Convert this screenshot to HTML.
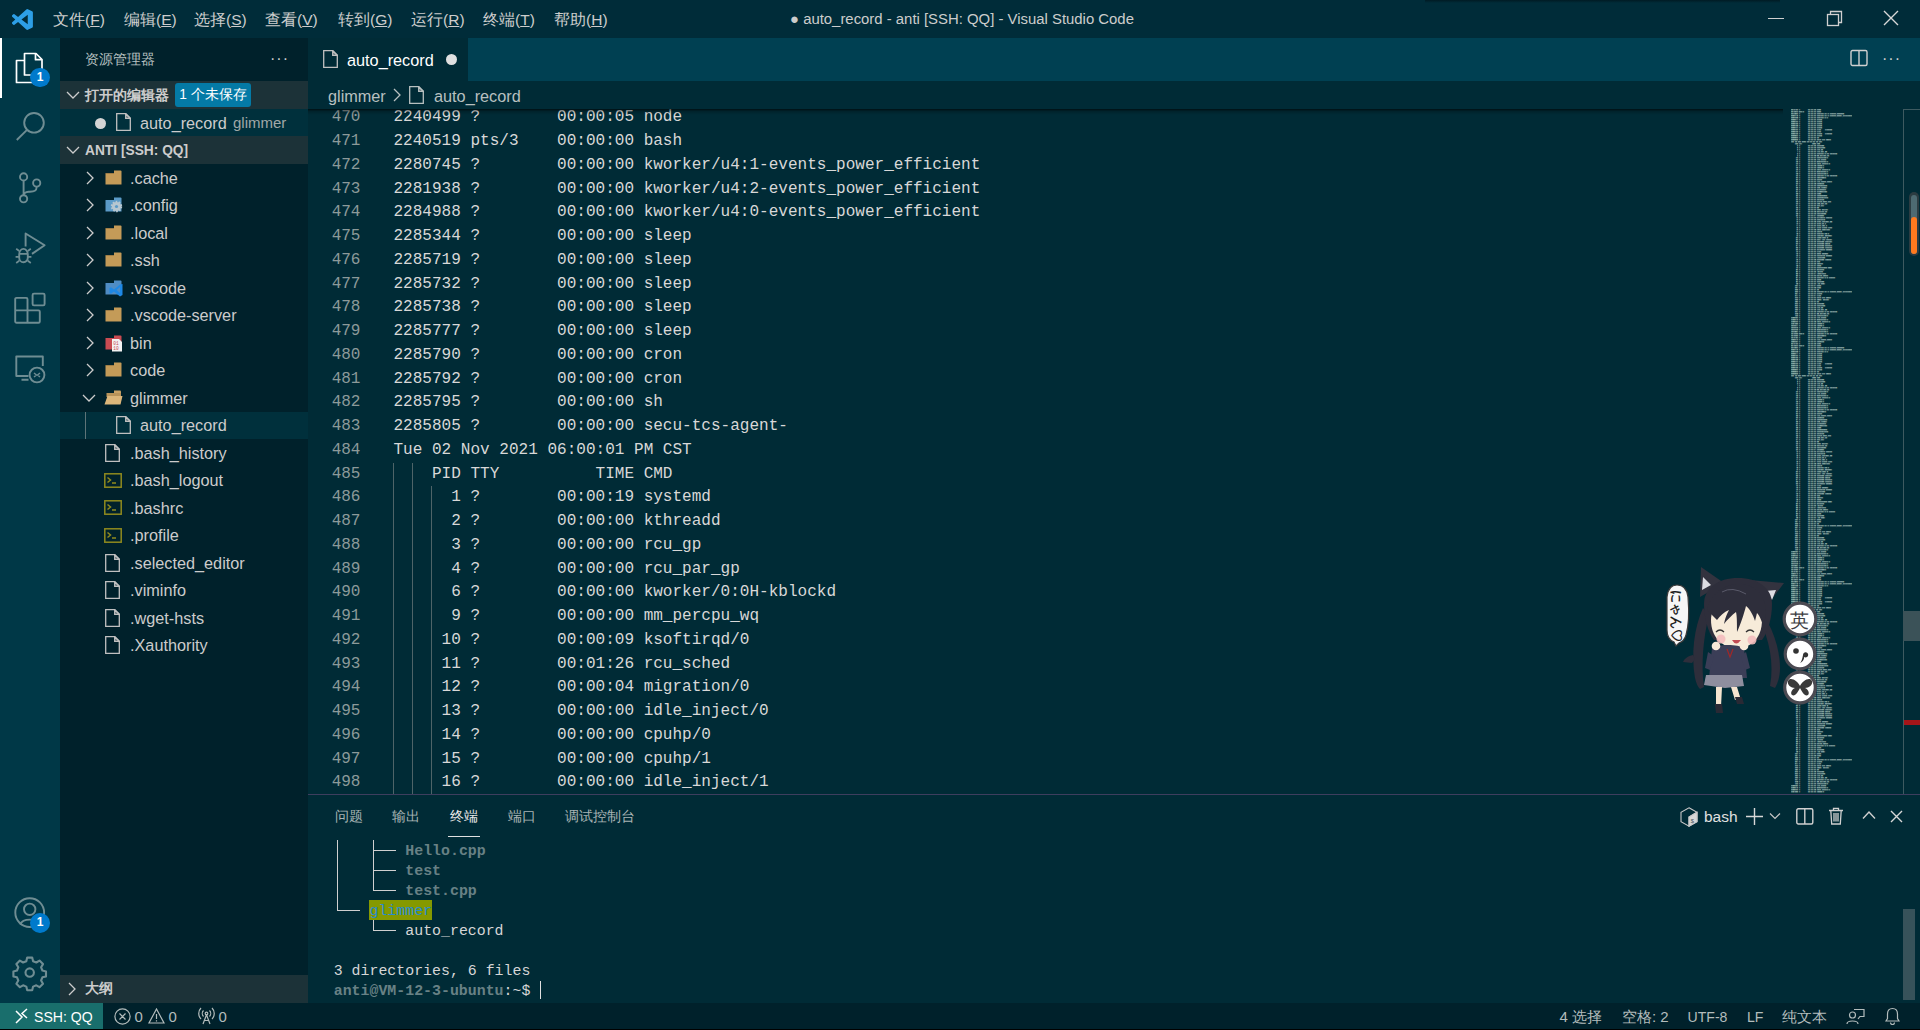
<!DOCTYPE html>
<html><head><meta charset="utf-8">
<style>
html,body{margin:0;padding:0;}
body{width:1920px;height:1030px;overflow:hidden;position:relative;background:#002b36;font-family:"Liberation Sans",sans-serif;color:#cccccc;}
.a{position:absolute;}
.ui{font-family:"Liberation Sans",sans-serif;white-space:pre;}
/* title bar */
#title{left:0;top:0;width:1920px;height:38px;background:#002c39;}
.menu{top:11px;font-size:15.5px;color:#cccccc;line-height:18px;}
/* activity bar */
#act{left:0;top:38px;width:60px;height:965px;background:#003847;}
/* sidebar */
#side{left:60px;top:38px;width:248px;height:965px;background:#00212b;}
.sech{left:60px;width:248px;height:28px;background:#1c3238;}
.row{left:60px;width:248px;height:27.5px;}
.ti{font-size:16.25px;color:#cccccc;line-height:20px;}
/* editor */
#tabs{left:308px;top:38px;width:1612px;height:43px;background:#004052;}
#tab1{left:308px;top:38px;width:160px;height:43px;background:#002b36;}
#bc{left:308px;top:81px;width:1612px;height:27.75px;background:#002b36;}
.ln{position:absolute;left:308px;width:52.5px;text-align:right;font-family:"Liberation Mono",monospace;font-size:16.04px;line-height:23.75px;color:#8c9a9a;white-space:pre;}
.tx{position:absolute;left:393.5px;font-family:"Liberation Mono",monospace;font-size:16.04px;line-height:23.75px;color:#d8d8d8;white-space:pre;}
.guide{position:absolute;width:1px;background:#4e6468;}
#edclip{left:308px;top:108.75px;width:1612px;height:685.25px;overflow:hidden;}
/* panel */
#panel{left:308px;top:794px;width:1612px;height:209px;background:#002b36;border-top:1px solid #3e3e5e;box-sizing:border-box;}
.ptab{top:808px;font-size:13.75px;color:#a9b4b4;line-height:18px;}
.term{position:absolute;font-family:"Liberation Mono",monospace;font-size:14.9px;line-height:20px;white-space:pre;color:#d6d6d6;}
/* status */
#status{left:0;top:1003px;width:1920px;height:26px;background:#00212b;}
.st{top:1008px;font-size:15px;color:#b3bcbc;line-height:18px;}
</style></head>
<body>
<!-- TITLE BAR -->
<div id="title" class="a"></div>
<div class="a" style="left:1425px;top:0;width:355px;height:3px;background:linear-gradient(#001b24,#002c3900)"></div>
<svg class="a" style="left:12px;top:9px" width="21" height="21" viewBox="0 0 100 100">
  <path d="M96 10.8 75.4 0.9a6.2 6.2 0 0 0-7.1 1.2L28.9 38 11.7 25a4.2 4.2 0 0 0-5.3.2L.9 30.2a4.2 4.2 0 0 0 0 6.2L15.8 50 .9 63.6a4.2 4.2 0 0 0 0 6.2l5.5 5a4.2 4.2 0 0 0 5.3.2L28.9 62l39.4 35.9a6.2 6.2 0 0 0 7.1 1.2L96 89.2a6.2 6.2 0 0 0 3.5-5.6V16.4a6.2 6.2 0 0 0-3.5-5.6ZM75 72.7 45.1 50 75 27.3Z" fill="#2d9fe6"/>
</svg>
<div class="a ui menu" style="left:53px">文件(<u>F</u>)</div>
<div class="a ui menu" style="left:124px">编辑(<u>E</u>)</div>
<div class="a ui menu" style="left:194px">选择(<u>S</u>)</div>
<div class="a ui menu" style="left:265px">查看(<u>V</u>)</div>
<div class="a ui menu" style="left:338px">转到(<u>G</u>)</div>
<div class="a ui menu" style="left:411px">运行(<u>R</u>)</div>
<div class="a ui menu" style="left:483px">终端(<u>T</u>)</div>
<div class="a ui menu" style="left:554px">帮助(<u>H</u>)</div>
<div class="a ui" style="left:790px;top:10px;font-size:14.9px;line-height:18px;color:#cccccc">● auto_record - anti [SSH: QQ] - Visual Studio Code</div>
<div class="a" style="left:1768px;top:18px;width:16px;height:1.3px;background:#d0d0d0"></div>
<svg class="a" style="left:1826px;top:10px" width="17" height="17" viewBox="0 0 17 17" fill="none" stroke="#d0d0d0" stroke-width="1.3"><rect x="1.5" y="4.5" width="11" height="11"/><path d="M4.5 4.5V1.5h11v11h-3"/></svg>
<svg class="a" style="left:1883px;top:10px" width="16" height="16" viewBox="0 0 16 16" stroke="#d8d8d8" stroke-width="1.4"><path d="M1 1 15 15M15 1 1 15"/></svg>

<!-- ACTIVITY BAR -->
<div id="act" class="a"></div>
<div class="a" style="left:0;top:38px;width:2px;height:60px;background:#ffffff"></div>
<svg class="a" style="left:0;top:0" width="60" height="1003" viewBox="0 0 60 1003" fill="none" stroke-linejoin="round">
 <g stroke="#ffffff" stroke-width="1.7">
  <path d="M24.5 53.5h11.5l6 6v15.5h-17.5z"/><path d="M35.5 53.5v6.2h6.2"/><path d="M24.5 60.5h-8v22h17v-7.5"/>
 </g>
 <g stroke="#6f8d93" stroke-width="1.9">
  <circle cx="34" cy="122.8" r="9.8"/><path d="M27 129.8 16.8 140"/>
  <circle cx="23.6" cy="176.9" r="3.6"/><circle cx="36.7" cy="183" r="3.6"/><circle cx="23.6" cy="198.8" r="3.6"/>
  <path d="M23.6 180.5v14.7M36.7 186.6c0 5-3 4.8-8 5.2-3 .3-5 1.4-5 3.4"/>
  <path d="M25.6 246.5V233.5l19 11.8-12.6 8.6"/>
  <path d="M19.2 254.5a4.3 5.6 0 0 1 8.6 0v3.2a4.3 4.6 0 0 1-8.6 0z"/><path d="M19.2 253.8h8.6M19.2 251l-3-2.2M19.2 256.8h-3.6M19.2 260.8l-3 2.2M27.8 251l3-2.2M27.8 256.8h3.6M27.8 260.8l3 2.2" stroke-width="1.7"/>
  <path d="M15.2 310.4h12.3v-11.2a1.3 1.3 0 0 0-1.3-1.3h-9.7a1.3 1.3 0 0 0-1.3 1.3zM15.2 310.4v11a1.3 1.3 0 0 0 1.3 1.3h22a1.3 1.3 0 0 0 1.3-1.3v-9.7a1.3 1.3 0 0 0-1.3-1.3H27.5v12.3"/>
  <rect x="32.6" y="293.6" width="12" height="11.8" rx="1.3"/>
  <path d="M28.5 376H16.3V356.5h26.5v9.5M21.5 379.8h7"/><circle cx="37" cy="375" r="7.4"/><path d="M34 373l2.5 2-2.5 2M40 373l-2.5 2 2.5 2" stroke-width="1.4"/>
  <circle cx="29.7" cy="912.6" r="14.4"/><circle cx="29.7" cy="909.3" r="5.7"/><path d="M20 924.5c3-6.5 16.5-6.5 19.5 0"/>
  <path d="M27.2 957.6h5l.9 3.6 3.2 1.3 3.2-1.9 3.5 3.5-1.9 3.2 1.3 3.2 3.6.9v5l-3.6.9-1.3 3.2 1.9 3.2-3.5 3.5-3.2-1.9-3.2 1.3-.9 3.6h-5l-.9-3.6-3.2-1.3-3.2 1.9-3.5-3.5 1.9-3.2-1.3-3.2-3.6-.9v-5l3.6-.9 1.3-3.2-1.9-3.2 3.5-3.5 3.2 1.9 3.2-1.3z" stroke-width="2.1"/>
  <circle cx="29.7" cy="972.6" r="4.2" stroke-width="2.1"/>
 </g>
</svg>
<div class="a" style="left:30.3px;top:68.1px;width:19.4px;height:19.4px;border-radius:50%;background:#007acc;color:#fff;font-size:12px;font-weight:bold;text-align:center;line-height:19.4px">1</div>
<div class="a" style="left:30.3px;top:913.2px;width:19.8px;height:19.8px;border-radius:50%;background:#007acc;color:#fff;font-size:12px;font-weight:bold;text-align:center;line-height:19.8px">1</div>

<!-- SIDEBAR -->
<div id="side" class="a"></div>
<div class="a ui" style="left:85px;top:51px;font-size:13.75px;line-height:18px;color:#b9c2c2">资源管理器</div>
<div class="a ui" style="left:270px;top:50px;font-size:16px;line-height:18px;color:#cccccc;letter-spacing:1px">···</div>
<!-- open editors header -->
<div class="a sech" style="top:81px"></div>
<svg class="a" style="left:66px;top:89px" width="14" height="12" viewBox="0 0 14 12" fill="none" stroke="#cccccc" stroke-width="1.3"><path d="M1 3l6 6 6-6"/></svg>
<div class="a ui" style="left:85px;top:87px;font-size:13.75px;line-height:18px;font-weight:bold;color:#cccccc">打开的编辑器</div>
<div class="a ui" style="left:175px;top:83px;width:76px;height:24px;background:#047aa6;border-radius:3px;color:#ffffff;font-size:13.75px;line-height:24px;text-align:center">1 个未保存</div>
<!-- open editor row -->
<div class="a row" style="top:109px;height:27px;background:#00303c"></div>
<div class="a" style="left:94.5px;top:117.5px;width:11px;height:11px;border-radius:50%;background:#d4d4d4"></div>
<svg class="a fileico" style="left:116px;top:113px" width="15" height="18" viewBox="0 0 15 18" fill="none" stroke="#c0c0c0" stroke-width="1.3"><path d="M.7.7h9l4.6 4.6v12H.7z"/><path d="M9.7.7v4.6h4.6z" fill="#a8a8a8" fill-opacity=".5"/></svg>
<div class="a ui ti" style="left:140px;top:113px">auto_record</div>
<div class="a ui ti" style="left:233px;top:113px;color:#a0a8a8;font-size:15px">glimmer</div>
<!-- workspace header -->
<div class="a sech" style="top:136px"></div>
<svg class="a" style="left:66px;top:144px" width="14" height="12" viewBox="0 0 14 12" fill="none" stroke="#cccccc" stroke-width="1.3"><path d="M1 3l6 6 6-6"/></svg>
<div class="a ui" style="left:85px;top:142px;font-size:13.75px;line-height:18px;font-weight:bold;color:#cccccc">ANTI [SSH: QQ]</div>
<svg class="a" style="left:85px;top:171px" width="10" height="14" viewBox="0 0 10 14" fill="none" stroke="#cccccc" stroke-width="1.3"><path d="M2 1l6 6-6 6"/></svg>
<svg class="a" style="left:105px;top:170px" width="17" height="15" viewBox="0 0 17 15"><path d="M9 0.5h6.5a1 1 0 0 1 1 1V3H9z" fill="#c49b58"/><path d="M0.5 3h16v11.5H0.5z" fill="#c49b58"/><path d="M0.5 3h8.5v1H0.5z" fill="#00000030"/></svg>
<div class="a ui ti" style="left:130px;top:167.75px">.cache</div>
<svg class="a" style="left:85px;top:198px" width="10" height="14" viewBox="0 0 10 14" fill="none" stroke="#cccccc" stroke-width="1.3"><path d="M2 1l6 6-6 6"/></svg>
<svg class="a" style="left:105px;top:197px" width="18" height="16" viewBox="0 0 18 16"><path d="M9 0.5h6.5a1 1 0 0 1 1 1V3H9z" fill="#5b9bc8"/><path d="M0.5 3h16v11.5H0.5z" fill="#5b9bc8"/><circle cx="11.5" cy="9.5" r="4.6" fill="#b7c7d0" stroke="#b7c7d0" stroke-width="2.2" stroke-dasharray="1.6 1.3"/><circle cx="11.5" cy="9.5" r="1.6" fill="#5b9bc8"/></svg>
<div class="a ui ti" style="left:130px;top:195.25px">.config</div>
<svg class="a" style="left:85px;top:226px" width="10" height="14" viewBox="0 0 10 14" fill="none" stroke="#cccccc" stroke-width="1.3"><path d="M2 1l6 6-6 6"/></svg>
<svg class="a" style="left:105px;top:225px" width="17" height="15" viewBox="0 0 17 15"><path d="M9 0.5h6.5a1 1 0 0 1 1 1V3H9z" fill="#c49b58"/><path d="M0.5 3h16v11.5H0.5z" fill="#c49b58"/><path d="M0.5 3h8.5v1H0.5z" fill="#00000030"/></svg>
<div class="a ui ti" style="left:130px;top:222.75px">.local</div>
<svg class="a" style="left:85px;top:253px" width="10" height="14" viewBox="0 0 10 14" fill="none" stroke="#cccccc" stroke-width="1.3"><path d="M2 1l6 6-6 6"/></svg>
<svg class="a" style="left:105px;top:252px" width="17" height="15" viewBox="0 0 17 15"><path d="M9 0.5h6.5a1 1 0 0 1 1 1V3H9z" fill="#c49b58"/><path d="M0.5 3h16v11.5H0.5z" fill="#c49b58"/><path d="M0.5 3h8.5v1H0.5z" fill="#00000030"/></svg>
<div class="a ui ti" style="left:130px;top:250.25px">.ssh</div>
<svg class="a" style="left:85px;top:281px" width="10" height="14" viewBox="0 0 10 14" fill="none" stroke="#cccccc" stroke-width="1.3"><path d="M2 1l6 6-6 6"/></svg>
<svg class="a" style="left:105px;top:280px" width="18" height="17" viewBox="0 0 18 17"><path d="M9 0.5h6.5a1 1 0 0 1 1 1V3H9z" fill="#4f8cc4"/><path d="M0.5 3h16v11.5H0.5z" fill="#4f8cc4"/><path d="M17.5 4v11l-2.5 1.5-6-5-3 2.3-1.5-.8V8l1.5-.8 3 2.3 6-5z" fill="#1e88e5"/><path d="M15 7l-3.5 3 3.5 3z" fill="#4f8cc4"/></svg>
<div class="a ui ti" style="left:130px;top:277.75px">.vscode</div>
<svg class="a" style="left:85px;top:308px" width="10" height="14" viewBox="0 0 10 14" fill="none" stroke="#cccccc" stroke-width="1.3"><path d="M2 1l6 6-6 6"/></svg>
<svg class="a" style="left:105px;top:307px" width="17" height="15" viewBox="0 0 17 15"><path d="M9 0.5h6.5a1 1 0 0 1 1 1V3H9z" fill="#c49b58"/><path d="M0.5 3h16v11.5H0.5z" fill="#c49b58"/><path d="M0.5 3h8.5v1H0.5z" fill="#00000030"/></svg>
<div class="a ui ti" style="left:130px;top:305.25px">.vscode-server</div>
<svg class="a" style="left:85px;top:336px" width="10" height="14" viewBox="0 0 10 14" fill="none" stroke="#cccccc" stroke-width="1.3"><path d="M2 1l6 6-6 6"/></svg>
<svg class="a" style="left:105px;top:335px" width="18" height="17" viewBox="0 0 18 17"><path d="M9 0.5h6.5a1 1 0 0 1 1 1V3H9z" fill="#c94b52"/><path d="M0.5 3h16v11.5H0.5z" fill="#c94b52"/><path d="M7 4h7l3 3v9.5H7z" fill="#f2f2f2"/><text x="8.3" y="10" font-size="4.5" font-family="Liberation Mono" fill="#c94b52">01</text><text x="8.3" y="14.5" font-size="4.5" font-family="Liberation Mono" fill="#c94b52">10</text></svg>
<div class="a ui ti" style="left:130px;top:332.75px">bin</div>
<svg class="a" style="left:85px;top:363px" width="10" height="14" viewBox="0 0 10 14" fill="none" stroke="#cccccc" stroke-width="1.3"><path d="M2 1l6 6-6 6"/></svg>
<svg class="a" style="left:105px;top:362px" width="17" height="15" viewBox="0 0 17 15"><path d="M9 0.5h6.5a1 1 0 0 1 1 1V3H9z" fill="#c49b58"/><path d="M0.5 3h16v11.5H0.5z" fill="#c49b58"/><path d="M0.5 3h8.5v1H0.5z" fill="#00000030"/></svg>
<div class="a ui ti" style="left:130px;top:360.25px">code</div>
<svg class="a" style="left:82px;top:393px" width="14" height="10" viewBox="0 0 14 10" fill="none" stroke="#cccccc" stroke-width="1.3"><path d="M1 2l6 6 6-6"/></svg>
<svg class="a" style="left:104px;top:390px" width="19" height="15" viewBox="0 0 19 15"><path d="M10 0.5h6a1 1 0 0 1 1 1V3H10z" fill="#c9a266"/><path d="M2.5 3h14.5v4H2.5z" fill="#b8935a"/><path d="M3.5 6h15l-2 8.5H0.5z" fill="#dcb67a"/></svg>
<div class="a ui ti" style="left:130px;top:387.75px">glimmer</div>
<div class="a" style="left:60px;top:411.5px;width:248px;height:27.5px;background:#00303c"></div>
<div class="a" style="left:85px;top:411.5px;width:1px;height:27.5px;background:#5e7478"></div>
<svg class="a" style="left:116px;top:416px" width="15" height="18" viewBox="0 0 15 18" fill="none" stroke="#c0c0c0" stroke-width="1.3"><path d="M.7.7h9l4.6 4.6v12H.7z"/><path d="M9.7.7v4.6h4.6z" fill="#a8a8a8" fill-opacity=".5"/></svg>
<div class="a ui ti" style="left:140px;top:415.25px">auto_record</div>
<svg class="a" style="left:105px;top:444px" width="15" height="18" viewBox="0 0 15 18" fill="none" stroke="#c0c0c0" stroke-width="1.3"><path d="M.7.7h9l4.6 4.6v12H.7z"/><path d="M9.7.7v4.6h4.6z" fill="#a8a8a8" fill-opacity=".5"/></svg>
<div class="a ui ti" style="left:130px;top:442.75px">.bash_history</div>
<svg class="a" style="left:104px;top:473px" width="18" height="15" viewBox="0 0 18 15" fill="none" stroke="#8f8a1e" stroke-width="1.5"><rect x=".8" y=".8" width="16.4" height="13.4"/><path d="M3.5 4.5l3 2.5-3 2.5M8 10h4"/></svg>
<div class="a ui ti" style="left:130px;top:470.25px">.bash_logout</div>
<svg class="a" style="left:104px;top:500px" width="18" height="15" viewBox="0 0 18 15" fill="none" stroke="#8f8a1e" stroke-width="1.5"><rect x=".8" y=".8" width="16.4" height="13.4"/><path d="M3.5 4.5l3 2.5-3 2.5M8 10h4"/></svg>
<div class="a ui ti" style="left:130px;top:497.75px">.bashrc</div>
<svg class="a" style="left:104px;top:528px" width="18" height="15" viewBox="0 0 18 15" fill="none" stroke="#8f8a1e" stroke-width="1.5"><rect x=".8" y=".8" width="16.4" height="13.4"/><path d="M3.5 4.5l3 2.5-3 2.5M8 10h4"/></svg>
<div class="a ui ti" style="left:130px;top:525.25px">.profile</div>
<svg class="a" style="left:105px;top:554px" width="15" height="18" viewBox="0 0 15 18" fill="none" stroke="#c0c0c0" stroke-width="1.3"><path d="M.7.7h9l4.6 4.6v12H.7z"/><path d="M9.7.7v4.6h4.6z" fill="#a8a8a8" fill-opacity=".5"/></svg>
<div class="a ui ti" style="left:130px;top:552.75px">.selected_editor</div>
<svg class="a" style="left:105px;top:581px" width="15" height="18" viewBox="0 0 15 18" fill="none" stroke="#c0c0c0" stroke-width="1.3"><path d="M.7.7h9l4.6 4.6v12H.7z"/><path d="M9.7.7v4.6h4.6z" fill="#a8a8a8" fill-opacity=".5"/></svg>
<div class="a ui ti" style="left:130px;top:580.25px">.viminfo</div>
<svg class="a" style="left:105px;top:609px" width="15" height="18" viewBox="0 0 15 18" fill="none" stroke="#c0c0c0" stroke-width="1.3"><path d="M.7.7h9l4.6 4.6v12H.7z"/><path d="M9.7.7v4.6h4.6z" fill="#a8a8a8" fill-opacity=".5"/></svg>
<div class="a ui ti" style="left:130px;top:607.75px">.wget-hsts</div>
<svg class="a" style="left:105px;top:636px" width="15" height="18" viewBox="0 0 15 18" fill="none" stroke="#c0c0c0" stroke-width="1.3"><path d="M.7.7h9l4.6 4.6v12H.7z"/><path d="M9.7.7v4.6h4.6z" fill="#a8a8a8" fill-opacity=".5"/></svg>
<div class="a ui ti" style="left:130px;top:635.25px">.Xauthority</div>
<!-- outline -->
<div class="a sech" style="top:975px"></div>
<svg class="a" style="left:67px;top:982px" width="10" height="14" viewBox="0 0 10 14" fill="none" stroke="#cccccc" stroke-width="1.3"><path d="M2 1l6 6-6 6"/></svg>
<div class="a ui" style="left:85px;top:980px;font-size:13.75px;line-height:18px;font-weight:bold;color:#cccccc">大纲</div>

<!-- EDITOR -->
<div id="tabs" class="a"></div>
<div id="tab1" class="a"></div>
<svg class="a" style="left:323px;top:50px" width="15" height="18" viewBox="0 0 15 18" fill="none" stroke="#c0c0c0" stroke-width="1.3"><path d="M.7.7h9l4.6 4.6v12H.7z"/><path d="M9.7.7v4.6h4.6z" fill="#a8a8a8" fill-opacity=".5"/></svg>
<div class="a ui ti" style="left:347px;top:50px;color:#ffffff">auto_record</div>
<div class="a" style="left:445.5px;top:53.5px;width:11px;height:11px;border-radius:50%;background:#e0e0e0"></div>
<svg class="a" style="left:1850px;top:49px" width="18" height="18" viewBox="0 0 18 18" fill="none" stroke="#d0d0d0" stroke-width="1.4"><rect x="1" y="1.5" width="16" height="15" rx="1.5"/><path d="M9 1.5v15"/></svg>
<div class="a ui" style="left:1882px;top:50px;font-size:16px;line-height:18px;color:#d0d0d0;letter-spacing:1px">···</div>
<div id="bc" class="a"></div>
<div class="a ui" style="left:328px;top:86px;font-size:16.25px;line-height:20px;color:#b8c0c0">glimmer</div>
<svg class="a" style="left:392px;top:88px" width="10" height="14" viewBox="0 0 10 14" fill="none" stroke="#b8c0c0" stroke-width="1.3"><path d="M2 1l6 6-6 6"/></svg>
<svg class="a" style="left:409px;top:86px" width="15" height="18" viewBox="0 0 15 18" fill="none" stroke="#b8c0c0" stroke-width="1.3"><path d="M.7.7h9l4.6 4.6v12H.7z"/><path d="M9.7.7v4.6h4.6z" fill="#a8a8a8" fill-opacity=".5"/></svg>
<div class="a ui" style="left:434px;top:86px;font-size:16.25px;line-height:20px;color:#b8c0c0">auto_record</div>
<div id="edclip" class="a">
<div style="position:absolute;left:-308px;top:-108.75px;width:1920px;height:1030px">
<div class="ln" style="top:106.40px">470</div><div class="tx" style="top:106.40px">2240499 ?        00:00:05 node</div>
<div class="ln" style="top:130.15px">471</div><div class="tx" style="top:130.15px">2240519 pts/3    00:00:00 bash</div>
<div class="ln" style="top:153.90px">472</div><div class="tx" style="top:153.90px">2280745 ?        00:00:00 kworker/u4:1-events_power_efficient</div>
<div class="ln" style="top:177.65px">473</div><div class="tx" style="top:177.65px">2281938 ?        00:00:00 kworker/u4:2-events_power_efficient</div>
<div class="ln" style="top:201.40px">474</div><div class="tx" style="top:201.40px">2284988 ?        00:00:00 kworker/u4:0-events_power_efficient</div>
<div class="ln" style="top:225.15px">475</div><div class="tx" style="top:225.15px">2285344 ?        00:00:00 sleep</div>
<div class="ln" style="top:248.90px">476</div><div class="tx" style="top:248.90px">2285719 ?        00:00:00 sleep</div>
<div class="ln" style="top:272.65px">477</div><div class="tx" style="top:272.65px">2285732 ?        00:00:00 sleep</div>
<div class="ln" style="top:296.40px">478</div><div class="tx" style="top:296.40px">2285738 ?        00:00:00 sleep</div>
<div class="ln" style="top:320.15px">479</div><div class="tx" style="top:320.15px">2285777 ?        00:00:00 sleep</div>
<div class="ln" style="top:343.90px">480</div><div class="tx" style="top:343.90px">2285790 ?        00:00:00 cron</div>
<div class="ln" style="top:367.65px">481</div><div class="tx" style="top:367.65px">2285792 ?        00:00:00 cron</div>
<div class="ln" style="top:391.40px">482</div><div class="tx" style="top:391.40px">2285795 ?        00:00:00 sh</div>
<div class="ln" style="top:415.15px">483</div><div class="tx" style="top:415.15px">2285805 ?        00:00:00 secu-tcs-agent-</div>
<div class="ln" style="top:438.90px">484</div><div class="tx" style="top:438.90px">Tue 02 Nov 2021 06:00:01 PM CST</div>
<div class="ln" style="top:462.65px">485</div><div class="tx" style="top:462.65px">    PID TTY          TIME CMD</div>
<div class="ln" style="top:486.40px">486</div><div class="tx" style="top:486.40px">      1 ?        00:00:19 systemd</div>
<div class="ln" style="top:510.15px">487</div><div class="tx" style="top:510.15px">      2 ?        00:00:00 kthreadd</div>
<div class="ln" style="top:533.90px">488</div><div class="tx" style="top:533.90px">      3 ?        00:00:00 rcu_gp</div>
<div class="ln" style="top:557.65px">489</div><div class="tx" style="top:557.65px">      4 ?        00:00:00 rcu_par_gp</div>
<div class="ln" style="top:581.40px">490</div><div class="tx" style="top:581.40px">      6 ?        00:00:00 kworker/0:0H-kblockd</div>
<div class="ln" style="top:605.15px">491</div><div class="tx" style="top:605.15px">      9 ?        00:00:00 mm_percpu_wq</div>
<div class="ln" style="top:628.90px">492</div><div class="tx" style="top:628.90px">     10 ?        00:00:09 ksoftirqd/0</div>
<div class="ln" style="top:652.65px">493</div><div class="tx" style="top:652.65px">     11 ?        00:01:26 rcu_sched</div>
<div class="ln" style="top:676.40px">494</div><div class="tx" style="top:676.40px">     12 ?        00:00:04 migration/0</div>
<div class="ln" style="top:700.15px">495</div><div class="tx" style="top:700.15px">     13 ?        00:00:00 idle_inject/0</div>
<div class="ln" style="top:723.90px">496</div><div class="tx" style="top:723.90px">     14 ?        00:00:00 cpuhp/0</div>
<div class="ln" style="top:747.65px">497</div><div class="tx" style="top:747.65px">     15 ?        00:00:00 cpuhp/1</div>
<div class="ln" style="top:771.40px">498</div><div class="tx" style="top:771.40px">     16 ?        00:00:00 idle_inject/1</div>
<div class="guide" style="left:393px;top:462.65px;height:331.35px"></div><div class="guide" style="left:412px;top:462.65px;height:331.35px"></div><div class="guide" style="left:431px;top:486.40px;height:307.60px"></div>
</div>
</div>
<div class="a" style="left:308px;top:108.75px;width:1475px;height:6px;background:linear-gradient(#000000a0,#00000030 40%,#00000000)"></div>
<div class="a" style="left:1790px;top:108.75px;width:113px;height:685.25px;overflow:hidden"><div style="position:absolute;left:1px;top:0.4px;width:1130px;transform:scale(0.1);transform-origin:0 0;opacity:1;font-family:'Liberation Mono',monospace;font-size:16.667px;line-height:20px;white-space:pre;color:#e8f2f2;font-weight:bold">2240499 ?        00:00:05 node
2240519 pts/3    00:00:00 bash
2271830 ?        00:00:00 kworker/u4:1-events_unbound
2280745 ?        00:00:00 kworker/u4:1-events_power_efficient
2281938 ?        00:00:00 kworker/0:1
2285344 ?        00:00:00 sleep
2285719 ?        00:00:00 sleep
2285732 ?        00:00:00 sleep
2285738 ?        00:00:00 sleep
2285777 ?        00:00:00 sleep
2285790 ?        00:00:00 cron    cronjob
2285792 ?        00:00:00 cron
2285795 ?        00:00:00 sleep   cronjob
2285801 ?        00:00:00 sleep
2285803 ?        00:00:00 sh
2285805 ?        00:00:00 secu-tcs-agent-
Tue 02 Nov 2021 06:00:01 PM CST
    PID TTY          TIME CMD
      1 ?        00:00:05 systemd
      2 ?        00:00:02 kthreadd
      3 ?        00:00:06 rcu_gp
      4 ?        00:00:00 rcu_par_gp
      6 ?        00:00:01 kworker/0:0H-kblockd
      9 ?        00:00:08 mm_percpu_wq
     10 ?        00:00:01 ksoftirqd/0
     11 ?        00:00:05 rcu_sched
     12 ?        00:00:09 migration/0
     13 ?        00:00:00 idle_inject/0
     14 ?        00:00:08 cpuhp/0
     15 ?        00:00:03 cpuhp/1
     16 ?        00:00:00 idle_inject/1
     17 ?        00:00:01 migration/1
     18 ?        00:00:06 ksoftirqd/1
     19 ?        00:00:06 kworker/1:0H-kblockd
     20 ?        00:00:01 kdevtmpfs
     21 ?        00:00:03 netns
     22 ?        00:00:01 rcu_tasks_kthre
     23 ?        00:00:08 kauditd
     24 ?        00:00:06 khungtaskd
     25 ?        00:00:00 oom_reaper
     26 ?        00:00:09 writeback
     27 ?        00:00:01 kcompactd0
     28 ?        00:00:03 ksmd
     29 ?        00:00:09 khugepaged
     30 ?        00:00:00 kintegrityd
     31 ?        00:00:09 kblockd
     32 ?        00:00:09 blkcg_punt_bio
     33 ?        00:00:06 tpm_dev_wq
     34 ?        00:00:00 ata_sff
     35 ?        00:00:03 md
     36 ?        00:00:00 edac-poller
     37 ?        00:00:08 devfreq_wq
     38 ?        00:00:02 watchdogd
     39 ?        00:00:04 kswapd0
     40 ?        00:00:06 ecryptfs-kthrea
     41 ?        00:00:02 kthrotld
     42 ?        00:00:08 acpi_thermal_pm
     43 ?        00:00:01 scsi_eh_0
     44 ?        00:00:09 scsi_tmf_0
     45 ?        00:00:04 vfio-irqfd-clea
     46 ?        00:00:08 ipv6_addrconf
     47 ?        00:00:02 kstrp
     48 ?        00:00:01 kworker/u5:0
     49 ?        00:00:09 charger_manager
     50 ?        00:00:09 jbd2/vda1-8
     51 ?        00:00:03 ext4-rsv-conver
     52 ?        00:00:05 systemd-journal
     53 ?        00:00:01 systemd-udevd
     54 ?        00:00:08 systemd-network
     55 ?        00:00:01 systemd-resolve
     56 ?        00:00:09 accounts-daemon
     71 ?        00:00:00 cron
     72 ?        00:00:09 dbus-daemon
     73 ?        00:00:03 networkd-dispat
     74 ?        00:00:07 rsyslogd
     75 ?        00:00:08 systemd-logind
     76 ?        00:00:06 atd
     77 ?        00:00:05 agetty
     78 ?        00:00:07 sshd
     79 ?        00:00:09 unattended-upgr
     80 ?        00:00:07 polkitd
     81 ?        00:00:05 YDLive
     82 ?        00:00:04 YDService
     83 ?        00:00:03 barad_agent
     84 ?        00:00:02 kworker/0:2-events
     86 ?        00:00:03 sshd
     87 ?        00:00:01 systemd
     98 ?        00:00:09 (sd-pam)
    127 ?        00:00:04 bash
    154 ?        00:00:08 node
    222 ?        00:00:07 sh
    223 ?        00:00:05 kworker/u4:1-events_power_efficient
    224 ?        00:00:07 sleep
    274 ?        00:00:04 cron
    310 ?        00:00:09 secu-tcs-agent-
    363 ?        00:00:01 tmux: server
    380 ?        00:00:01 ps
    530 ?        00:00:08 systemd
    561 ?        00:00:06 kthreadd
    620 ?        00:00:02 rcu_gp
    623 ?        00:00:05 rcu_par_gp
    634 ?        00:00:02 kworker/0:0H-kblockd
    698 ?        00:00:07 mm_percpu_wq
    703 ?        00:00:06 ksoftirqd/0
1182021 ?        00:00:00 rcu_sched
1182046 ?        00:00:01 migration/0
1182100 ?        00:00:08 idle_inject/0
1184355 ?        00:00:09 cpuhp/0
1203374 ?        00:00:05 cpuhp/1
1203375 ?        00:00:05 idle_inject/1
1209112 ?        00:00:05 migration/1
1219857 ?        00:00:09 ksoftirqd/1
1243322 pts/3    00:00:07 kworker/1:0H-kblockd
1243323 ?        00:00:09 kdevtmpfs
1243451 ?        00:00:07 netns
1283040 ?        00:00:01 rcu_tasks_kthre
1283127 ?        00:00:01 kauditd
2240499 ?        00:00:05 node
2240519 pts/3    00:00:00 bash
2271830 ?        00:00:00 kworker/u4:1-events_unbound
2280745 ?        00:00:00 kworker/u4:1-events_power_efficient
2281938 ?        00:00:00 kworker/0:1
2285344 ?        00:00:00 sleep
2285719 ?        00:00:00 sleep
2285732 ?        00:00:00 sleep
2285738 ?        00:00:00 sleep
2285777 ?        00:00:00 sleep
2285790 ?        00:00:00 cron    cronjob
2285792 ?        00:00:00 cron
2285795 ?        00:00:00 sleep   cronjob
2285801 ?        00:00:00 sleep
2285803 ?        00:00:00 sh
2285805 ?        00:00:00 secu-tcs-agent-
Tue 02 Nov 2021 06:00:01 PM CST
    PID TTY          TIME CMD
      1 ?        00:00:05 systemd
      2 ?        00:00:02 kthreadd
      3 ?        00:00:06 rcu_gp
      4 ?        00:00:00 rcu_par_gp
      6 ?        00:00:01 kworker/0:0H-kblockd
      9 ?        00:00:08 mm_percpu_wq
     10 ?        00:00:01 ksoftirqd/0
     11 ?        00:00:05 rcu_sched
     12 ?        00:00:09 migration/0
     13 ?        00:00:00 idle_inject/0
     14 ?        00:00:08 cpuhp/0
     15 ?        00:00:03 cpuhp/1
     16 ?        00:00:00 idle_inject/1
     17 ?        00:00:01 migration/1
     18 ?        00:00:06 ksoftirqd/1
     19 ?        00:00:06 kworker/1:0H-kblockd
     20 ?        00:00:01 kdevtmpfs
     21 ?        00:00:03 netns
     22 ?        00:00:01 rcu_tasks_kthre
     23 ?        00:00:08 kauditd
     24 ?        00:00:06 khungtaskd
     25 ?        00:00:00 oom_reaper
     26 ?        00:00:09 writeback
     27 ?        00:00:01 kcompactd0
     28 ?        00:00:03 ksmd
     29 ?        00:00:09 khugepaged
     30 ?        00:00:00 kintegrityd
     31 ?        00:00:09 kblockd
     32 ?        00:00:09 blkcg_punt_bio
     33 ?        00:00:06 tpm_dev_wq
     34 ?        00:00:00 ata_sff
     35 ?        00:00:03 md
     36 ?        00:00:00 edac-poller
     37 ?        00:00:08 devfreq_wq
     38 ?        00:00:02 watchdogd
     39 ?        00:00:04 kswapd0
     40 ?        00:00:06 ecryptfs-kthrea
     41 ?        00:00:02 kthrotld
     42 ?        00:00:08 acpi_thermal_pm
     43 ?        00:00:01 scsi_eh_0
     44 ?        00:00:09 scsi_tmf_0
     45 ?        00:00:04 vfio-irqfd-clea
     46 ?        00:00:08 ipv6_addrconf
     47 ?        00:00:02 kstrp
     48 ?        00:00:01 kworker/u5:0
     49 ?        00:00:09 charger_manager
     50 ?        00:00:09 jbd2/vda1-8
     51 ?        00:00:03 ext4-rsv-conver
     52 ?        00:00:05 systemd-journal
     53 ?        00:00:01 systemd-udevd
     54 ?        00:00:08 systemd-network
     55 ?        00:00:01 systemd-resolve
     56 ?        00:00:09 accounts-daemon
     71 ?        00:00:00 cron
     72 ?        00:00:09 dbus-daemon
     73 ?        00:00:03 networkd-dispat
     74 ?        00:00:07 rsyslogd
     75 ?        00:00:08 systemd-logind
     76 ?        00:00:06 atd
     77 ?        00:00:05 agetty
     78 ?        00:00:07 sshd
     79 ?        00:00:09 unattended-upgr
     80 ?        00:00:07 polkitd
     81 ?        00:00:05 YDLive
     82 ?        00:00:04 YDService
     83 ?        00:00:03 barad_agent
     84 ?        00:00:02 kworker/0:2-events
     86 ?        00:00:03 sshd
     87 ?        00:00:01 systemd
     98 ?        00:00:09 (sd-pam)
    127 ?        00:00:04 bash
    154 ?        00:00:08 node
    222 ?        00:00:07 sh
    223 ?        00:00:05 kworker/u4:1-events_power_efficient
    224 ?        00:00:07 sleep
    274 ?        00:00:04 cron
    310 ?        00:00:09 secu-tcs-agent-
    363 ?        00:00:01 tmux: server
    380 ?        00:00:01 ps
    530 ?        00:00:08 systemd
    561 ?        00:00:06 kthreadd
    620 ?        00:00:02 rcu_gp
    623 ?        00:00:05 rcu_par_gp
    634 ?        00:00:02 kworker/0:0H-kblockd
    698 ?        00:00:07 mm_percpu_wq
    703 ?        00:00:06 ksoftirqd/0
1182021 ?        00:00:00 rcu_sched
1182046 ?        00:00:01 migration/0
1182100 ?        00:00:08 idle_inject/0
1184355 ?        00:00:09 cpuhp/0
1203374 ?        00:00:05 cpuhp/1
1203375 ?        00:00:05 idle_inject/1
1209112 ?        00:00:05 migration/1
1219857 ?        00:00:09 ksoftirqd/1
1243322 pts/3    00:00:07 kworker/1:0H-kblockd
1243323 ?        00:00:09 kdevtmpfs
1243451 ?        00:00:07 netns
1283040 ?        00:00:01 rcu_tasks_kthre
1283127 ?        00:00:01 kauditd
2240499 ?        00:00:05 node
2240519 pts/3    00:00:00 bash
2271830 ?        00:00:00 kworker/u4:1-events_unbound
2280745 ?        00:00:00 kworker/u4:1-events_power_efficient
2281938 ?        00:00:00 kworker/0:1
2285344 ?        00:00:00 sleep
2285719 ?        00:00:00 sleep
2285732 ?        00:00:00 sleep
2285738 ?        00:00:00 sleep
2285777 ?        00:00:00 sleep
2285790 ?        00:00:00 cron    cronjob
2285792 ?        00:00:00 cron
2285795 ?        00:00:00 sleep   cronjob
2285801 ?        00:00:00 sleep
2285803 ?        00:00:00 sh
2285805 ?        00:00:00 secu-tcs-agent-
Tue 02 Nov 2021 06:00:01 PM CST
    PID TTY          TIME CMD
      1 ?        00:00:05 systemd
      2 ?        00:00:02 kthreadd
      3 ?        00:00:06 rcu_gp
      4 ?        00:00:00 rcu_par_gp
      6 ?        00:00:01 kworker/0:0H-kblockd
      9 ?        00:00:08 mm_percpu_wq
     10 ?        00:00:01 ksoftirqd/0
     11 ?        00:00:05 rcu_sched
     12 ?        00:00:09 migration/0
     13 ?        00:00:00 idle_inject/0
     14 ?        00:00:08 cpuhp/0
     15 ?        00:00:03 cpuhp/1
     16 ?        00:00:00 idle_inject/1
     17 ?        00:00:01 migration/1
     18 ?        00:00:06 ksoftirqd/1
     19 ?        00:00:06 kworker/1:0H-kblockd
     20 ?        00:00:01 kdevtmpfs
     21 ?        00:00:03 netns
     22 ?        00:00:01 rcu_tasks_kthre
     23 ?        00:00:08 kauditd
     24 ?        00:00:06 khungtaskd
     25 ?        00:00:00 oom_reaper
     26 ?        00:00:09 writeback
     27 ?        00:00:01 kcompactd0
     28 ?        00:00:03 ksmd
     29 ?        00:00:09 khugepaged
     30 ?        00:00:00 kintegrityd
     31 ?        00:00:09 kblockd
     32 ?        00:00:09 blkcg_punt_bio
     33 ?        00:00:06 tpm_dev_wq
     34 ?        00:00:00 ata_sff
     35 ?        00:00:03 md
     36 ?        00:00:00 edac-poller
     37 ?        00:00:08 devfreq_wq
     38 ?        00:00:02 watchdogd
     39 ?        00:00:04 kswapd0
     40 ?        00:00:06 ecryptfs-kthrea
     41 ?        00:00:02 kthrotld
     42 ?        00:00:08 acpi_thermal_pm
     43 ?        00:00:01 scsi_eh_0
     44 ?        00:00:09 scsi_tmf_0
     45 ?        00:00:04 vfio-irqfd-clea
     46 ?        00:00:08 ipv6_addrconf
     47 ?        00:00:02 kstrp
     48 ?        00:00:01 kworker/u5:0
     49 ?        00:00:09 charger_manager
     50 ?        00:00:09 jbd2/vda1-8
     51 ?        00:00:03 ext4-rsv-conver
     52 ?        00:00:05 systemd-journal
     53 ?        00:00:01 systemd-udevd
     54 ?        00:00:08 systemd-network
     55 ?        00:00:01 systemd-resolve
     56 ?        00:00:09 accounts-daemon
     71 ?        00:00:00 cron
     72 ?        00:00:09 dbus-daemon
     73 ?        00:00:03 networkd-dispat
     74 ?        00:00:07 rsyslogd
     75 ?        00:00:08 systemd-logind
     76 ?        00:00:06 atd
     77 ?        00:00:05 agetty
     78 ?        00:00:07 sshd
     79 ?        00:00:09 unattended-upgr
     80 ?        00:00:07 polkitd
     81 ?        00:00:05 YDLive
     82 ?        00:00:04 YDService
     83 ?        00:00:03 barad_agent
     84 ?        00:00:02 kworker/0:2-events
     86 ?        00:00:03 sshd
     87 ?        00:00:01 systemd
     98 ?        00:00:09 (sd-pam)
    127 ?        00:00:04 bash
    154 ?        00:00:08 node
    222 ?        00:00:07 sh
    223 ?        00:00:05 kworker/u4:1-events_power_efficient
    224 ?        00:00:07 sleep
    274 ?        00:00:04 cron
    310 ?        00:00:09 secu-tcs-agent-
    363 ?        00:00:01 tmux: server
    380 ?        00:00:01 ps
    530 ?        00:00:08 systemd
    561 ?        00:00:06 kthreadd
    620 ?        00:00:02 rcu_gp
    623 ?        00:00:05 rcu_par_gp
    634 ?        00:00:02 kworker/0:0H-kblockd
    698 ?        00:00:07 mm_percpu_wq
    703 ?        00:00:06 ksoftirqd/0
1182021 ?        00:00:00 rcu_sched
1182046 ?        00:00:01 migration/0
1182100 ?        00:00:08 idle_inject/0
1184355 ?        00:00:09 cpuhp/0</div><div style="position:absolute;left:1px;top:1.1px;width:1130px;transform:scale(0.1);transform-origin:0 0;opacity:0.45;font-family:'Liberation Mono',monospace;font-size:16.667px;line-height:20px;white-space:pre;color:#e8f2f2;font-weight:bold">2240499 ?        00:00:05 node
2240519 pts/3    00:00:00 bash
2271830 ?        00:00:00 kworker/u4:1-events_unbound
2280745 ?        00:00:00 kworker/u4:1-events_power_efficient
2281938 ?        00:00:00 kworker/0:1
2285344 ?        00:00:00 sleep
2285719 ?        00:00:00 sleep
2285732 ?        00:00:00 sleep
2285738 ?        00:00:00 sleep
2285777 ?        00:00:00 sleep
2285790 ?        00:00:00 cron    cronjob
2285792 ?        00:00:00 cron
2285795 ?        00:00:00 sleep   cronjob
2285801 ?        00:00:00 sleep
2285803 ?        00:00:00 sh
2285805 ?        00:00:00 secu-tcs-agent-
Tue 02 Nov 2021 06:00:01 PM CST
    PID TTY          TIME CMD
      1 ?        00:00:05 systemd
      2 ?        00:00:02 kthreadd
      3 ?        00:00:06 rcu_gp
      4 ?        00:00:00 rcu_par_gp
      6 ?        00:00:01 kworker/0:0H-kblockd
      9 ?        00:00:08 mm_percpu_wq
     10 ?        00:00:01 ksoftirqd/0
     11 ?        00:00:05 rcu_sched
     12 ?        00:00:09 migration/0
     13 ?        00:00:00 idle_inject/0
     14 ?        00:00:08 cpuhp/0
     15 ?        00:00:03 cpuhp/1
     16 ?        00:00:00 idle_inject/1
     17 ?        00:00:01 migration/1
     18 ?        00:00:06 ksoftirqd/1
     19 ?        00:00:06 kworker/1:0H-kblockd
     20 ?        00:00:01 kdevtmpfs
     21 ?        00:00:03 netns
     22 ?        00:00:01 rcu_tasks_kthre
     23 ?        00:00:08 kauditd
     24 ?        00:00:06 khungtaskd
     25 ?        00:00:00 oom_reaper
     26 ?        00:00:09 writeback
     27 ?        00:00:01 kcompactd0
     28 ?        00:00:03 ksmd
     29 ?        00:00:09 khugepaged
     30 ?        00:00:00 kintegrityd
     31 ?        00:00:09 kblockd
     32 ?        00:00:09 blkcg_punt_bio
     33 ?        00:00:06 tpm_dev_wq
     34 ?        00:00:00 ata_sff
     35 ?        00:00:03 md
     36 ?        00:00:00 edac-poller
     37 ?        00:00:08 devfreq_wq
     38 ?        00:00:02 watchdogd
     39 ?        00:00:04 kswapd0
     40 ?        00:00:06 ecryptfs-kthrea
     41 ?        00:00:02 kthrotld
     42 ?        00:00:08 acpi_thermal_pm
     43 ?        00:00:01 scsi_eh_0
     44 ?        00:00:09 scsi_tmf_0
     45 ?        00:00:04 vfio-irqfd-clea
     46 ?        00:00:08 ipv6_addrconf
     47 ?        00:00:02 kstrp
     48 ?        00:00:01 kworker/u5:0
     49 ?        00:00:09 charger_manager
     50 ?        00:00:09 jbd2/vda1-8
     51 ?        00:00:03 ext4-rsv-conver
     52 ?        00:00:05 systemd-journal
     53 ?        00:00:01 systemd-udevd
     54 ?        00:00:08 systemd-network
     55 ?        00:00:01 systemd-resolve
     56 ?        00:00:09 accounts-daemon
     71 ?        00:00:00 cron
     72 ?        00:00:09 dbus-daemon
     73 ?        00:00:03 networkd-dispat
     74 ?        00:00:07 rsyslogd
     75 ?        00:00:08 systemd-logind
     76 ?        00:00:06 atd
     77 ?        00:00:05 agetty
     78 ?        00:00:07 sshd
     79 ?        00:00:09 unattended-upgr
     80 ?        00:00:07 polkitd
     81 ?        00:00:05 YDLive
     82 ?        00:00:04 YDService
     83 ?        00:00:03 barad_agent
     84 ?        00:00:02 kworker/0:2-events
     86 ?        00:00:03 sshd
     87 ?        00:00:01 systemd
     98 ?        00:00:09 (sd-pam)
    127 ?        00:00:04 bash
    154 ?        00:00:08 node
    222 ?        00:00:07 sh
    223 ?        00:00:05 kworker/u4:1-events_power_efficient
    224 ?        00:00:07 sleep
    274 ?        00:00:04 cron
    310 ?        00:00:09 secu-tcs-agent-
    363 ?        00:00:01 tmux: server
    380 ?        00:00:01 ps
    530 ?        00:00:08 systemd
    561 ?        00:00:06 kthreadd
    620 ?        00:00:02 rcu_gp
    623 ?        00:00:05 rcu_par_gp
    634 ?        00:00:02 kworker/0:0H-kblockd
    698 ?        00:00:07 mm_percpu_wq
    703 ?        00:00:06 ksoftirqd/0
1182021 ?        00:00:00 rcu_sched
1182046 ?        00:00:01 migration/0
1182100 ?        00:00:08 idle_inject/0
1184355 ?        00:00:09 cpuhp/0
1203374 ?        00:00:05 cpuhp/1
1203375 ?        00:00:05 idle_inject/1
1209112 ?        00:00:05 migration/1
1219857 ?        00:00:09 ksoftirqd/1
1243322 pts/3    00:00:07 kworker/1:0H-kblockd
1243323 ?        00:00:09 kdevtmpfs
1243451 ?        00:00:07 netns
1283040 ?        00:00:01 rcu_tasks_kthre
1283127 ?        00:00:01 kauditd
2240499 ?        00:00:05 node
2240519 pts/3    00:00:00 bash
2271830 ?        00:00:00 kworker/u4:1-events_unbound
2280745 ?        00:00:00 kworker/u4:1-events_power_efficient
2281938 ?        00:00:00 kworker/0:1
2285344 ?        00:00:00 sleep
2285719 ?        00:00:00 sleep
2285732 ?        00:00:00 sleep
2285738 ?        00:00:00 sleep
2285777 ?        00:00:00 sleep
2285790 ?        00:00:00 cron    cronjob
2285792 ?        00:00:00 cron
2285795 ?        00:00:00 sleep   cronjob
2285801 ?        00:00:00 sleep
2285803 ?        00:00:00 sh
2285805 ?        00:00:00 secu-tcs-agent-
Tue 02 Nov 2021 06:00:01 PM CST
    PID TTY          TIME CMD
      1 ?        00:00:05 systemd
      2 ?        00:00:02 kthreadd
      3 ?        00:00:06 rcu_gp
      4 ?        00:00:00 rcu_par_gp
      6 ?        00:00:01 kworker/0:0H-kblockd
      9 ?        00:00:08 mm_percpu_wq
     10 ?        00:00:01 ksoftirqd/0
     11 ?        00:00:05 rcu_sched
     12 ?        00:00:09 migration/0
     13 ?        00:00:00 idle_inject/0
     14 ?        00:00:08 cpuhp/0
     15 ?        00:00:03 cpuhp/1
     16 ?        00:00:00 idle_inject/1
     17 ?        00:00:01 migration/1
     18 ?        00:00:06 ksoftirqd/1
     19 ?        00:00:06 kworker/1:0H-kblockd
     20 ?        00:00:01 kdevtmpfs
     21 ?        00:00:03 netns
     22 ?        00:00:01 rcu_tasks_kthre
     23 ?        00:00:08 kauditd
     24 ?        00:00:06 khungtaskd
     25 ?        00:00:00 oom_reaper
     26 ?        00:00:09 writeback
     27 ?        00:00:01 kcompactd0
     28 ?        00:00:03 ksmd
     29 ?        00:00:09 khugepaged
     30 ?        00:00:00 kintegrityd
     31 ?        00:00:09 kblockd
     32 ?        00:00:09 blkcg_punt_bio
     33 ?        00:00:06 tpm_dev_wq
     34 ?        00:00:00 ata_sff
     35 ?        00:00:03 md
     36 ?        00:00:00 edac-poller
     37 ?        00:00:08 devfreq_wq
     38 ?        00:00:02 watchdogd
     39 ?        00:00:04 kswapd0
     40 ?        00:00:06 ecryptfs-kthrea
     41 ?        00:00:02 kthrotld
     42 ?        00:00:08 acpi_thermal_pm
     43 ?        00:00:01 scsi_eh_0
     44 ?        00:00:09 scsi_tmf_0
     45 ?        00:00:04 vfio-irqfd-clea
     46 ?        00:00:08 ipv6_addrconf
     47 ?        00:00:02 kstrp
     48 ?        00:00:01 kworker/u5:0
     49 ?        00:00:09 charger_manager
     50 ?        00:00:09 jbd2/vda1-8
     51 ?        00:00:03 ext4-rsv-conver
     52 ?        00:00:05 systemd-journal
     53 ?        00:00:01 systemd-udevd
     54 ?        00:00:08 systemd-network
     55 ?        00:00:01 systemd-resolve
     56 ?        00:00:09 accounts-daemon
     71 ?        00:00:00 cron
     72 ?        00:00:09 dbus-daemon
     73 ?        00:00:03 networkd-dispat
     74 ?        00:00:07 rsyslogd
     75 ?        00:00:08 systemd-logind
     76 ?        00:00:06 atd
     77 ?        00:00:05 agetty
     78 ?        00:00:07 sshd
     79 ?        00:00:09 unattended-upgr
     80 ?        00:00:07 polkitd
     81 ?        00:00:05 YDLive
     82 ?        00:00:04 YDService
     83 ?        00:00:03 barad_agent
     84 ?        00:00:02 kworker/0:2-events
     86 ?        00:00:03 sshd
     87 ?        00:00:01 systemd
     98 ?        00:00:09 (sd-pam)
    127 ?        00:00:04 bash
    154 ?        00:00:08 node
    222 ?        00:00:07 sh
    223 ?        00:00:05 kworker/u4:1-events_power_efficient
    224 ?        00:00:07 sleep
    274 ?        00:00:04 cron
    310 ?        00:00:09 secu-tcs-agent-
    363 ?        00:00:01 tmux: server
    380 ?        00:00:01 ps
    530 ?        00:00:08 systemd
    561 ?        00:00:06 kthreadd
    620 ?        00:00:02 rcu_gp
    623 ?        00:00:05 rcu_par_gp
    634 ?        00:00:02 kworker/0:0H-kblockd
    698 ?        00:00:07 mm_percpu_wq
    703 ?        00:00:06 ksoftirqd/0
1182021 ?        00:00:00 rcu_sched
1182046 ?        00:00:01 migration/0
1182100 ?        00:00:08 idle_inject/0
1184355 ?        00:00:09 cpuhp/0
1203374 ?        00:00:05 cpuhp/1
1203375 ?        00:00:05 idle_inject/1
1209112 ?        00:00:05 migration/1
1219857 ?        00:00:09 ksoftirqd/1
1243322 pts/3    00:00:07 kworker/1:0H-kblockd
1243323 ?        00:00:09 kdevtmpfs
1243451 ?        00:00:07 netns
1283040 ?        00:00:01 rcu_tasks_kthre
1283127 ?        00:00:01 kauditd
2240499 ?        00:00:05 node
2240519 pts/3    00:00:00 bash
2271830 ?        00:00:00 kworker/u4:1-events_unbound
2280745 ?        00:00:00 kworker/u4:1-events_power_efficient
2281938 ?        00:00:00 kworker/0:1
2285344 ?        00:00:00 sleep
2285719 ?        00:00:00 sleep
2285732 ?        00:00:00 sleep
2285738 ?        00:00:00 sleep
2285777 ?        00:00:00 sleep
2285790 ?        00:00:00 cron    cronjob
2285792 ?        00:00:00 cron
2285795 ?        00:00:00 sleep   cronjob
2285801 ?        00:00:00 sleep
2285803 ?        00:00:00 sh
2285805 ?        00:00:00 secu-tcs-agent-
Tue 02 Nov 2021 06:00:01 PM CST
    PID TTY          TIME CMD
      1 ?        00:00:05 systemd
      2 ?        00:00:02 kthreadd
      3 ?        00:00:06 rcu_gp
      4 ?        00:00:00 rcu_par_gp
      6 ?        00:00:01 kworker/0:0H-kblockd
      9 ?        00:00:08 mm_percpu_wq
     10 ?        00:00:01 ksoftirqd/0
     11 ?        00:00:05 rcu_sched
     12 ?        00:00:09 migration/0
     13 ?        00:00:00 idle_inject/0
     14 ?        00:00:08 cpuhp/0
     15 ?        00:00:03 cpuhp/1
     16 ?        00:00:00 idle_inject/1
     17 ?        00:00:01 migration/1
     18 ?        00:00:06 ksoftirqd/1
     19 ?        00:00:06 kworker/1:0H-kblockd
     20 ?        00:00:01 kdevtmpfs
     21 ?        00:00:03 netns
     22 ?        00:00:01 rcu_tasks_kthre
     23 ?        00:00:08 kauditd
     24 ?        00:00:06 khungtaskd
     25 ?        00:00:00 oom_reaper
     26 ?        00:00:09 writeback
     27 ?        00:00:01 kcompactd0
     28 ?        00:00:03 ksmd
     29 ?        00:00:09 khugepaged
     30 ?        00:00:00 kintegrityd
     31 ?        00:00:09 kblockd
     32 ?        00:00:09 blkcg_punt_bio
     33 ?        00:00:06 tpm_dev_wq
     34 ?        00:00:00 ata_sff
     35 ?        00:00:03 md
     36 ?        00:00:00 edac-poller
     37 ?        00:00:08 devfreq_wq
     38 ?        00:00:02 watchdogd
     39 ?        00:00:04 kswapd0
     40 ?        00:00:06 ecryptfs-kthrea
     41 ?        00:00:02 kthrotld
     42 ?        00:00:08 acpi_thermal_pm
     43 ?        00:00:01 scsi_eh_0
     44 ?        00:00:09 scsi_tmf_0
     45 ?        00:00:04 vfio-irqfd-clea
     46 ?        00:00:08 ipv6_addrconf
     47 ?        00:00:02 kstrp
     48 ?        00:00:01 kworker/u5:0
     49 ?        00:00:09 charger_manager
     50 ?        00:00:09 jbd2/vda1-8
     51 ?        00:00:03 ext4-rsv-conver
     52 ?        00:00:05 systemd-journal
     53 ?        00:00:01 systemd-udevd
     54 ?        00:00:08 systemd-network
     55 ?        00:00:01 systemd-resolve
     56 ?        00:00:09 accounts-daemon
     71 ?        00:00:00 cron
     72 ?        00:00:09 dbus-daemon
     73 ?        00:00:03 networkd-dispat
     74 ?        00:00:07 rsyslogd
     75 ?        00:00:08 systemd-logind
     76 ?        00:00:06 atd
     77 ?        00:00:05 agetty
     78 ?        00:00:07 sshd
     79 ?        00:00:09 unattended-upgr
     80 ?        00:00:07 polkitd
     81 ?        00:00:05 YDLive
     82 ?        00:00:04 YDService
     83 ?        00:00:03 barad_agent
     84 ?        00:00:02 kworker/0:2-events
     86 ?        00:00:03 sshd
     87 ?        00:00:01 systemd
     98 ?        00:00:09 (sd-pam)
    127 ?        00:00:04 bash
    154 ?        00:00:08 node
    222 ?        00:00:07 sh
    223 ?        00:00:05 kworker/u4:1-events_power_efficient
    224 ?        00:00:07 sleep
    274 ?        00:00:04 cron
    310 ?        00:00:09 secu-tcs-agent-
    363 ?        00:00:01 tmux: server
    380 ?        00:00:01 ps
    530 ?        00:00:08 systemd
    561 ?        00:00:06 kthreadd
    620 ?        00:00:02 rcu_gp
    623 ?        00:00:05 rcu_par_gp
    634 ?        00:00:02 kworker/0:0H-kblockd
    698 ?        00:00:07 mm_percpu_wq
    703 ?        00:00:06 ksoftirqd/0
1182021 ?        00:00:00 rcu_sched
1182046 ?        00:00:01 migration/0
1182100 ?        00:00:08 idle_inject/0
1184355 ?        00:00:09 cpuhp/0</div></div>
<div class="a" style="left:1903px;top:108.75px;width:1px;height:685px;background:#3e5a60"></div>
<div class="a" style="left:1903px;top:108.75px;width:17px;height:1px;background:#3e5a60"></div>
<div class="a" style="left:1903px;top:611px;width:17px;height:30px;background:#3b5258"></div>
<div class="a" style="left:1904px;top:720px;width:16px;height:5px;background:#a51519"></div>
<div class="a" style="left:1909px;top:192px;width:10px;height:64px;border-radius:5px;background:#2c3c42"></div>
<div class="a" style="left:1911px;top:194.5px;width:6px;height:59px;border-radius:3px;background:#4d6a72"></div>
<div class="a" style="left:1911px;top:217px;width:6px;height:36.5px;border-radius:3px;background:#ff7a1e"></div>

<!-- PANEL -->
<div id="panel" class="a"></div>
<div class="a ui ptab" style="left:335px">问题</div>
<div class="a ui ptab" style="left:392px">输出</div>
<div class="a ui ptab" style="left:450px;color:#e8e8e8">终端</div>
<div class="a ui ptab" style="left:508px">端口</div>
<div class="a ui ptab" style="left:565px">调试控制台</div>
<div class="a" style="left:448px;top:835.5px;width:32px;height:1.5px;background:#e0e0e0"></div>

<svg class="a" style="left:1680px;top:807px" width="18" height="20" viewBox="0 0 18 20" fill="none" stroke="#c8c8c8" stroke-width="1.1"><path d="M9 .8l8 4.5v9.4L9 19.2 1 14.7V5.3z"/><path d="M17 5.3 9 10v9.2" /><path d="M9 10v9.2l8-4.5V5.3z" fill="#d8d8d8"/><text x="10.5" y="15.5" font-size="6" fill="#3a4a50" stroke="none" font-family="Liberation Mono">$</text></svg>
<div class="a ui" style="left:1704px;top:808px;font-size:15.5px;line-height:18px;color:#e0e0e0">bash</div>
<svg class="a" style="left:1745px;top:807px" width="19" height="19" viewBox="0 0 19 19" stroke="#d8d8d8" stroke-width="1.4"><path d="M9.5 1v17M1 9.5h17"/></svg>
<svg class="a" style="left:1769px;top:812px" width="12" height="8" viewBox="0 0 12 8" fill="none" stroke="#c8c8c8" stroke-width="1.2"><path d="M1 1.5l5 5 5-5"/></svg>
<svg class="a" style="left:1796px;top:808px" width="18" height="17" viewBox="0 0 18 17" fill="none" stroke="#d0d0d0" stroke-width="1.4"><rect x=".8" y=".8" width="16" height="15.2" rx="1.5"/><path d="M8.8 .8v15.2"/></svg>
<svg class="a" style="left:1828px;top:807px" width="16" height="18" viewBox="0 0 16 18" fill="none" stroke="#d0d0d0" stroke-width="1.3"><path d="M1 3.5h14M5.5 3.5V1.3h5v2.2M2.8 3.5l.9 13.5h8.6l.9-13.5M6 6v8.5M8 6v8.5M10 6v8.5"/></svg>
<svg class="a" style="left:1862px;top:810px" width="14" height="10" viewBox="0 0 14 10" fill="none" stroke="#d0d0d0" stroke-width="1.4"><path d="M1 8.5l6-6.5 6 6.5"/></svg>
<svg class="a" style="left:1890px;top:810px" width="13" height="13" viewBox="0 0 13 13" stroke="#d8d8d8" stroke-width="1.4"><path d="M1 1l11 11M12 1 1 12"/></svg>
<div class="a" style="left:1903px;top:908.5px;width:12px;height:91px;background:#37525a"></div>

<div class="a" style="left:337px;top:840px;width:1.3px;height:71px;background:#d0d0d0"></div>
<div class="a" style="left:337px;top:909.8px;width:23px;height:1.3px;background:#d0d0d0"></div>
<div class="a" style="left:373px;top:840px;width:1.3px;height:51px;background:#d0d0d0"></div>
<div class="a" style="left:373px;top:849.8px;width:23px;height:1.3px;background:#d0d0d0"></div>
<div class="a" style="left:373px;top:869.8px;width:23px;height:1.3px;background:#d0d0d0"></div>
<div class="a" style="left:373px;top:889.8px;width:23px;height:1.3px;background:#d0d0d0"></div>
<div class="a" style="left:373px;top:920px;width:1.3px;height:11px;background:#d0d0d0"></div>
<div class="a" style="left:373px;top:929.8px;width:23px;height:1.3px;background:#d0d0d0"></div>
<div class="term" style="left:405.27px;top:841px;color:#688185;font-weight:bold">Hello.cpp</div>
<div class="term" style="left:405.27px;top:861px;color:#688185;font-weight:bold">test</div>
<div class="term" style="left:405.27px;top:881px;color:#688185;font-weight:bold">test.cpp</div>
<div class="a" style="left:369px;top:900px;width:63px;height:20px;background:#859900"></div>
<div class="term" style="left:369.51px;top:901px;color:#268bd2">glimmer</div>
<div class="term" style="left:405.27px;top:921px;">auto_record</div>
<div class="term" style="left:333.75px;top:961px;">3 directories, 6 files</div>
<div class="term" style="left:333.75px;top:981px;color:#688185;font-weight:bold">anti@VM-12-3-ubuntu</div>
<div class="term" style="left:503.61px;top:981px;">:~$</div>
<div class="a" style="left:539.5px;top:981px;width:1.3px;height:18px;background:#e0e0e0"></div>

<!-- STATUS BAR -->
<div id="status" class="a"></div>
<div class="a" style="left:0;top:1029px;width:1920px;height:1px;background:#000"></div>
<div class="a" style="left:0;top:1003px;width:103px;height:26px;background:#196e6c"></div>

<svg class="a" style="left:15px;top:1008px" width="13" height="16" viewBox="0 0 13 16" fill="none" stroke="#ffffff" stroke-width="1.5"><path d="M1 15l6-6-6-6M12 1l-5 4.5 5 4.5" /></svg>
<div class="a ui st" style="left:34px;color:#ffffff;font-size:14.1px">SSH: QQ</div>
<svg class="a" style="left:114px;top:1008px" width="17" height="17" viewBox="0 0 17 17" fill="none" stroke="#b3bcbc" stroke-width="1.2"><circle cx="8.5" cy="8.5" r="7.6"/><path d="M5.5 5.5l6 6M11.5 5.5l-6 6"/></svg>
<div class="a ui st" style="left:134.5px">0</div>
<svg class="a" style="left:148px;top:1008px" width="17" height="16" viewBox="0 0 17 16" fill="none" stroke="#b3bcbc" stroke-width="1.2"><path d="M8.5 1 16 15H1z"/><path d="M8.5 6v5M8.5 12.3v1.2"/></svg>
<div class="a ui st" style="left:168.5px">0</div>
<svg class="a" style="left:198px;top:1007px" width="17" height="18" viewBox="0 0 17 18" fill="none" stroke="#b3bcbc" stroke-width="1.2"><circle cx="8.5" cy="6.5" r="1.3"/><path d="M5.5 3.5a4.3 4.3 0 0 0 0 6M11.5 3.5a4.3 4.3 0 0 1 0 6M3 1a7.8 7.8 0 0 0 0 11M14 1a7.8 7.8 0 0 1 0 11M8.5 7.8 5 17M8.5 7.8 12 17M6.2 13.5h4.6"/></svg>
<div class="a ui st" style="left:218.5px">0</div>
<div class="a ui st" style="left:1559.5px">4 选择</div>
<div class="a ui st" style="left:1622px">空格: 2</div>
<div class="a ui st" style="left:1687.5px;font-size:14.1px">UTF-8</div>
<div class="a ui st" style="left:1747px;font-size:14.1px">LF</div>
<div class="a ui st" style="left:1781.5px">纯文本</div>
<svg class="a" style="left:1846px;top:1008px" width="19" height="17" viewBox="0 0 19 17" fill="none" stroke="#b3bcbc" stroke-width="1.2"><circle cx="6.5" cy="7" r="3"/><path d="M1 16c0-4 11-4 11 0M8 1.5h10v7h-4l-2 2.5"/></svg>
<svg class="a" style="left:1885px;top:1007px" width="15" height="18" viewBox="0 0 15 18" fill="none" stroke="#b3bcbc" stroke-width="1.2"><path d="M7.5 1.5c-3.5 0-5 2.5-5 5.5v4.5L1 14h13l-1.5-2.5V7c0-3-1.5-5.5-5-5.5zM5.5 15.5a2 2 0 0 0 4 0"/></svg>


<svg class="a" style="left:1660px;top:560px" width="160" height="160" viewBox="1660 560 160 160">
 <!-- speech bubble -->
 <path d="M1667 597c1-9 5-12 10-12 6 0 10 4 11 12 1 12 1 28-2 38-1 4-4 7-7 8l-3 3-2-4c-5-2-7-6-7-12z" fill="#f6f6f6" stroke="#3a3a3a" stroke-width="1.2"/>
 <text transform="translate(1672 590) rotate(90)" font-size="12.5" font-weight="bold" fill="#1e1e1e" font-family="Liberation Sans">にゃん♡</text>
 <!-- twin tails -->
 <path d="M1703 608c-9 20-12 46-8 70 1 5 3 9 5 11l4-2c-3-22-1-48 5-72z" fill="#2e2e3b"/>
 <path d="M1693 655c-5 1-9 4-10 7l9 1 3-4z" fill="#2e2e3b"/>
 <path d="M1760 610c12 16 20 38 20 58 0 8-2 15-5 20l-5-2c4-22 0-46-12-70z" fill="#2e2e3b"/>
 <!-- ears -->
 <path d="M1701 567l-1 30 24-14z" fill="#33333f"/>
 <path d="M1703 577l-1 13 9-5z" fill="#dcdce2"/>
 <path d="M1784 583l-34-3 18 24z" fill="#33333f"/>
 <path d="M1776 590l-11 1 7 9z" fill="#dcdce2"/>
 <!-- hair back -->
 <path d="M1704 604c0-16 14-26 34-26s34 10 34 26c0 14-4 28-10 36l-48 0c-6-8-10-22-10-36z" fill="#2e2e3b"/>
 <!-- face -->
 <path d="M1711 620c0-14 11-22 26-22s25 8 25 22c0 17-10 28-25 28s-26-11-26-28z" fill="#f7ebd9"/>
 <!-- bangs -->
 <path d="M1707 610c3-16 18-26 32-26 14 0 26 10 27 26l-2 18c-2-6-4-12-7-15l-2 8c-2-6-5-12-9-15-2 8-6 20-9 26 0-8 0-16-1-20-4 3-9 8-12 12 1-6 3-10 5-14-5 2-9 6-12 10z" fill="#2e2e3b"/>
 <path d="M1722 592q10-6 24 2" stroke="#5a5a6a" stroke-width="1" fill="none"/>
 <circle cx="1721" cy="639" r="4.5" fill="#f3bcbc" opacity=".9"/><circle cx="1752" cy="640" r="4.5" fill="#f3bcbc" opacity=".9"/>
 <path d="M1716 632q4-4 8 0M1746 632q4-4 8 0" stroke="#333" stroke-width="1.3" fill="none"/>
 <path d="M1732 640q4 7 9 0z" fill="#c24c55"/>
 <!-- body -->
 <path d="M1712 648c6-4 26-4 32 0l3 30h-38z" fill="#3b3e57"/>
 <path d="M1708 652l-3 16 5 2 4-14zM1746 652l4 16-5 2-4-14z" fill="#3b3e57"/>
 <circle cx="1716" cy="646" r="4.3" fill="#f7ebd9"/><circle cx="1744" cy="646" r="4.3" fill="#f7ebd9"/>
 <path d="M1727 649l3 8 3-8" stroke="#a02828" stroke-width="1.2" fill="none"/>
 <path d="M1706 675h36l2 11-19 2-21-3z" fill="#8e8e9e"/>
 <path d="M1716 687h6l-1 20h-5zM1731 687h6l4 13h-6z" fill="#f5e4cf"/>
 <path d="M1715 704h7l1 9h-7zM1735 697h7l2 7h-7z" fill="#292934"/>
 <!-- bubbles -->
 <g stroke="#4b4a52" stroke-width="3.2" fill="#ffffff">
  <circle cx="1800" cy="619" r="15.8"/><circle cx="1800" cy="654" r="14.8"/><circle cx="1800" cy="687.5" r="15.3"/>
 </g>
 <text x="1790" y="627" font-size="19" fill="#3e3e44" font-family="Liberation Sans">英</text>
 <circle cx="1796" cy="651" r="2.8" fill="#333"/><path d="M1803 655a2.6 2.6 0 1 1 1.2 2c0 3-2 5-4 6 1.5-2 2-4 2.8-8z" fill="#333"/>
 <path d="M1800 686c-2-5-10-10-12-5-1 4 3 7 7 7-3 1-5 5-3 7 3 2 6-3 8-7 2 4 5 9 8 7 2-2 0-6-3-7 4 0 8-3 7-7-2-5-10 0-12 5z" fill="#393939"/>
</svg>

</body></html>
